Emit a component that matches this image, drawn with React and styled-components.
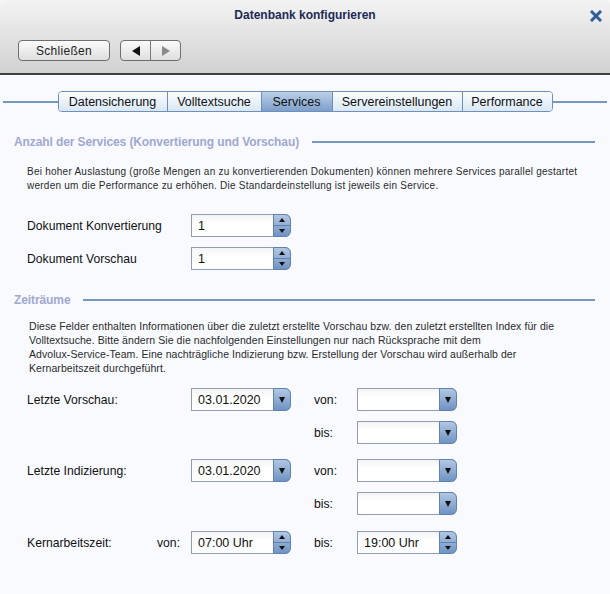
import React from "react";
import styled, { createGlobalStyle } from "styled-components";

const GlobalStyle = createGlobalStyle`
  html, body {
    margin: 0;
    padding: 0;
    background: #f8faff;
  }
  body {
    font-family: "Liberation Sans", Arial, sans-serif;
    color: #111;
  }
`;

const Window = styled.div`
  width: 610px;
  height: 594px;
  display: flex;
  flex-direction: column;
  background: #f8faff;
  overflow: hidden;
`;

const Header = styled.div`
  height: 75px;
  box-sizing: border-box;
  background: linear-gradient(#f3f3f3, #d1d1d1);
  border-bottom: 2px solid #3f3f3f;
  border-top-left-radius: 4px;
  border-top-right-radius: 4px;
  display: flex;
  flex-direction: column;
`;

const TitleRow = styled.div`
  height: 29px;
  display: flex;
  align-items: center;
  justify-content: center;
  position: relative;
`;

const Title = styled.div`
  font-size: 12px;
  font-weight: bold;
  color: #1c2b55;
`;

const Close = styled.div`
  position: absolute;
  right: 8px;
  top: 8px;
  width: 12px;
  height: 12px;
`;

const Toolbar = styled.div`
  display: flex;
  align-items: center;
  gap: 10px;
  padding: 11px 18px 0;
`;

const Button = styled.div`
  height: 21px;
  box-sizing: border-box;
  border: 1px solid #6f6f6f;
  border-radius: 4px;
  background: linear-gradient(#fbfbfb, #dedede);
  display: flex;
  align-items: center;
  justify-content: center;
  font-size: 12px;
  color: #222;
  letter-spacing: 0.3px;
  width: ${(p) => p.w}px;
`;

const NavGroup = styled.div`
  display: flex;
  height: 21px;
  box-sizing: border-box;
  border: 1px solid #6f6f6f;
  border-radius: 4px;
  background: linear-gradient(#fbfbfb, #dedede);
  overflow: hidden;
`;

const NavHalf = styled.div`
  width: 29px;
  display: flex;
  align-items: center;
  justify-content: center;
  border-left: ${(p) => (p.first ? "none" : "1px solid #7a7a7a")};
`;

const Arrow = styled.div`
  width: 0;
  height: 0;
  border-top: 5px solid transparent;
  border-bottom: 5px solid transparent;
  ${(p) =>
    p.dir === "left"
      ? `border-right: 8px solid ${p.color};`
      : `border-left: 8px solid ${p.color};`}
`;

const Body = styled.div`
  display: flex;
  flex-direction: column;
  padding-top: 16px;
`;

const TabRow = styled.div`
  display: flex;
  align-items: center;
  padding: 0 3px;
`;

const Rule = styled.div`
  flex: 1;
  height: 2px;
  background: #7598bd;
`;

const Tabs = styled.div`
  display: flex;
  border: 1px solid #6f8fb8;
  border-radius: 4px;
  overflow: hidden;
  height: 21px;
  box-sizing: border-box;
`;

const Tab = styled.div`
  width: ${(p) => p.w}px;
  box-sizing: border-box;
  display: flex;
  align-items: center;
  justify-content: center;
  font-size: 12.5px;
  color: #111;
  border-left: ${(p) => (p.first ? "none" : "1px solid #6f8fb8")};
  background: ${(p) =>
    p.active
      ? "linear-gradient(#bcd0e8, #7c9fca)"
      : "linear-gradient(#fbfdff, #d9e7f4)"};
`;

const Section = styled.div`
  display: flex;
  align-items: center;
  gap: 13px;
  padding: 0 15px 0 14px;
  margin-top: ${(p) => p.mt}px;
`;

const SectionTitle = styled.div`
  font-size: 12px;
  font-weight: bold;
  letter-spacing: -0.1px;
  color: #a0a8d2;
  white-space: nowrap;
`;

const Note = styled.div`
  padding-left: ${(p) => p.pl || 27}px;
  margin-top: ${(p) => p.mt}px;
  font-size: ${(p) => p.fs || 10}px;
  letter-spacing: ${(p) => p.ls || 0}px;
  line-height: 14px;
  color: #2a2a2a;
  white-space: nowrap;
`;

const SpinGrid = styled.div`
  display: grid;
  grid-template-columns: 164px 100px;
  grid-auto-rows: 23px;
  row-gap: 10px;
  padding-left: 27px;
  margin-top: 21px;
  align-items: center;
`;

const FormGroup = styled.div`
  display: grid;
  grid-template-columns: 130px 34px 100px 23px 43px 100px;
  grid-auto-rows: 23px;
  row-gap: 10px;
  padding-left: 27px;
  margin-top: ${(p) => p.mt}px;
  align-items: center;
`;

const Label = styled.div`
  font-size: 12.2px;
  color: #111;
  grid-column: ${(p) => p.col || "auto"};
  white-space: nowrap;
`;

const Field = styled.div`
  grid-column: ${(p) => p.col || "auto"};
  width: 100px;
  height: 23px;
  box-sizing: border-box;
  display: flex;
  border: 1px solid #8e9fb5;
  border-right: none;
  border-radius: 0 6px 6px 0;
  background: #fff;
`;

const FieldText = styled.div`
  flex: 1;
  display: flex;
  align-items: center;
  padding-left: 6px;
  font-size: 12.5px;
  color: #111;
  background: linear-gradient(#f4f4f4, #ffffff 40%);
`;

const FieldButton = styled.div`
  width: 16px;
  margin: -1px 0;
  border: 1px solid #5f82b4;
  border-radius: 0 6px 6px 0;
  background: linear-gradient(#b2c7e2, #6f93c3);
  display: flex;
  flex-direction: column;
  align-items: center;
  justify-content: center;
`;

const SpinHalf = styled.div`
  flex: 1;
  width: 100%;
  display: flex;
  align-items: center;
  justify-content: center;
  border-top: ${(p) => (p.bottom ? "1px solid #5f82b4" : "none")};
`;

const Tri = styled.div`
  width: 0;
  height: 0;
  border-left: ${(p) => p.s}px solid transparent;
  border-right: ${(p) => p.s}px solid transparent;
  ${(p) =>
    p.up
      ? `border-bottom: ${p.h}px solid #111;`
      : `border-top: ${p.h}px solid #111;`}
`;

const Spinner = ({ value, col }) => (
  <Field col={col}>
    <FieldText>{value}</FieldText>
    <FieldButton>
      <SpinHalf>
        <Tri up s={3} h={4} />
      </SpinHalf>
      <SpinHalf bottom>
        <Tri s={3} h={4} />
      </SpinHalf>
    </FieldButton>
  </Field>
);

const Combo = ({ value, col }) => (
  <Field col={col}>
    <FieldText>{value}</FieldText>
    <FieldButton>
      <Tri s={3.5} h={6} />
    </FieldButton>
  </Field>
);

const tabs = [
  { label: "Datensicherung", w: 108 },
  { label: "Volltextsuche", w: 94 },
  { label: "Services", w: 71, active: true },
  { label: "Servereinstellungen", w: 130 },
  { label: "Performance", w: 90 },
];

export default function App() {
  return (
    <>
      <GlobalStyle />
      <Window>
        <Header>
          <TitleRow>
            <Title>Datenbank konfigurieren</Title>
            <Close>
              <svg width="12" height="12" viewBox="0 0 12 12">
                <path d="M2 2 L10 10 M10 2 L2 10" stroke="#2f5d9c" strokeWidth="3" strokeLinecap="square" />
              </svg>
            </Close>
          </TitleRow>
          <Toolbar>
            <Button w={92}>Schließen</Button>
            <NavGroup>
              <NavHalf first>
                <Arrow dir="left" color="#111" />
              </NavHalf>
              <NavHalf>
                <Arrow dir="right" color="#8a8a8a" />
              </NavHalf>
            </NavGroup>
          </Toolbar>
        </Header>
        <Body>
          <TabRow>
            <Rule />
            <Tabs>
              {tabs.map((t, i) => (
                <Tab key={t.label} w={t.w} active={t.active} first={i === 0}>
                  {t.label}
                </Tab>
              ))}
            </Tabs>
            <Rule />
          </TabRow>

          <Section mt={23}>
            <SectionTitle>Anzahl der Services (Konvertierung und Vorschau)</SectionTitle>
            <Rule />
          </Section>
          <Note mt={16} ls={0.24}>
            Bei hoher Auslastung (große Mengen an zu konvertierenden Dokumenten) können mehrere Services parallel gestartet
            <br />
            werden um die Performance zu erhöhen. Die Standardeinstellung ist jeweils ein Service.
          </Note>
          <SpinGrid>
            <Label>Dokument Konvertierung</Label>
            <Spinner value="1" />
            <Label>Dokument Vorschau</Label>
            <Spinner value="1" />
          </SpinGrid>

          <Section mt={23}>
            <SectionTitle>Zeiträume</SectionTitle>
            <Rule />
          </Section>
          <Note mt={12} pl={29} fs={10.5} ls={0.07}>
            Diese Felder enthalten Informationen über die zuletzt erstellte Vorschau bzw. den zuletzt erstellten Index für die
            <br />
            Volltextsuche. Bitte ändern Sie die nachfolgenden Einstellungen nur nach Rücksprache mit dem
            <br />
            Advolux-Service-Team. Eine nachträgliche Indizierung bzw. Erstellung der Vorschau wird außerhalb der
            <br />
            Kernarbeitszeit durchgeführt.
          </Note>
          <FormGroup mt={13}>
            <Label col="1 / 3">Letzte Vorschau:</Label>
            <Combo col="3" value="03.01.2020" />
            <Label col="5">von:</Label>
            <Combo col="6" value="" />
            <Label col="5">bis:</Label>
            <Combo col="6" value="" />
          </FormGroup>
          <FormGroup mt={15}>
            <Label col="1 / 3">Letzte Indizierung:</Label>
            <Combo col="3" value="03.01.2020" />
            <Label col="5">von:</Label>
            <Combo col="6" value="" />
            <Label col="5">bis:</Label>
            <Combo col="6" value="" />
          </FormGroup>
          <FormGroup mt={16}>
            <Label col="1">Kernarbeitszeit:</Label>
            <Label col="2">von:</Label>
            <Spinner col="3" value="07:00 Uhr" />
            <Label col="5">bis:</Label>
            <Spinner col="6" value="19:00 Uhr" />
          </FormGroup>
        </Body>
      </Window>
    </>
  );
}
